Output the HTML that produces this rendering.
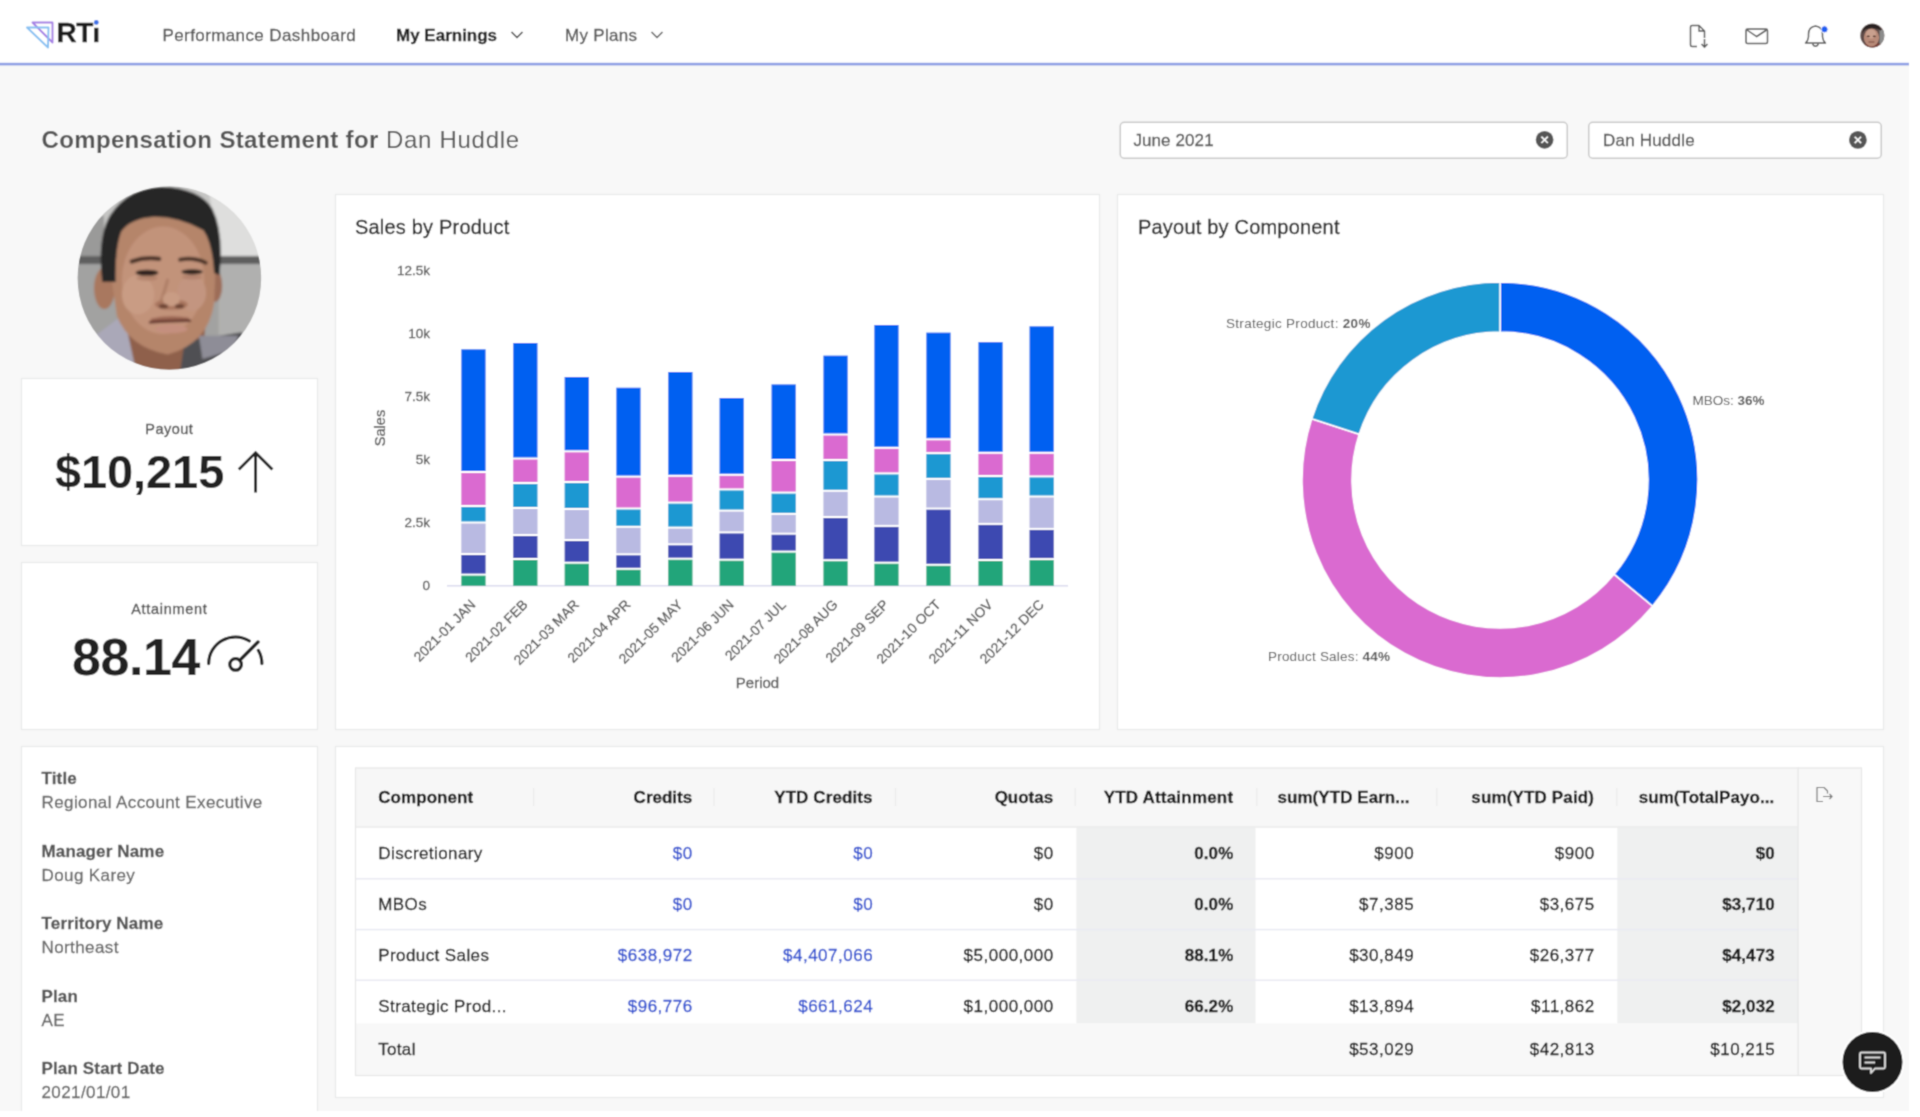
<!DOCTYPE html>
<html><head><meta charset="utf-8">
<style>
*{margin:0;padding:0;box-sizing:border-box}
html,body{width:1920px;height:1117px;overflow:hidden;background:#fff}
svg{position:absolute;left:0;top:0;display:block;will-change:transform}
text{font-family:"Liberation Sans",sans-serif}
</style></head><body>
<svg width="1920" height="1117" viewBox="0 0 1920 1117">
<defs><filter id="soft" x="0" y="0" width="1920" height="1117" filterUnits="userSpaceOnUse"><feConvolveMatrix order="3" kernelMatrix="0.03516 0.11719 0.03516 0.11719 0.39062 0.11719 0.03516 0.11719 0.03516" edgeMode="duplicate" preserveAlpha="false"/></filter></defs>
<g filter="url(#soft)">

<rect x="0" y="0" width="1909" height="1111" fill="#f8f8f8"/>
<rect x="0" y="0" width="1909" height="63" fill="#ffffff"/>
<rect x="0" y="62.8" width="1909" height="2.6" fill="#8c9ee4"/>
<path d="M32.5 22.5 L52.5 22.5 L52.5 42.5 Z" fill="none" stroke="#a47fe4" stroke-width="1.9" stroke-linejoin="round"/>
<path d="M27 27.5 L48.5 27.5 L48 47.5 Z" fill="none" stroke="#86c0f2" stroke-width="1.9" stroke-linejoin="round"/>
<text x="56.5" y="42.2" font-size="28" font-weight="bold" letter-spacing="-0.4" fill="#1c1c1c" stroke="#1c1c1c" stroke-width="0.3">RT</text>
<rect x="94.2" y="27.8" width="4.2" height="14.4" fill="#1c1c1c"/>
<circle cx="96.3" cy="22.4" r="2.4" fill="#3a6fe6"/>
<text x="162.5" y="40.5" font-size="17" letter-spacing="0.4" fill="#555" stroke="#555" stroke-width="0.3">Performance Dashboard</text>
<text x="396" y="40.5" font-size="17" font-weight="bold" fill="#1e1e1e" stroke="#1e1e1e" stroke-width="0.3">My Earnings</text>
<path d="M511.5 32 L517 37.5 L522.5 32" fill="none" stroke="#333" stroke-width="1.5"/>
<text x="565" y="40.5" font-size="17" letter-spacing="0.3" fill="#555" stroke="#555" stroke-width="0.3">My Plans</text>
<path d="M651.5 32 L657 37.5 L662.5 32" fill="none" stroke="#555" stroke-width="1.5"/>
<path d="M1697 46.5 L1692 46.5 Q1690.5 46.5 1690.5 45 L1690.5 27 Q1690.5 25.5 1692 25.5 L1699 25.5 L1704.5 31 L1704.5 38" fill="none" stroke="#555" stroke-width="1.5" stroke-linejoin="round"/>
<path d="M1699 25.5 L1699 31 L1704.5 31" fill="none" stroke="#555" stroke-width="1.3"/>
<path d="M1704.5 39 L1704.5 47 M1701.5 44 L1704.5 47.2 L1707.5 44" fill="none" stroke="#555" stroke-width="1.5"/>
<rect x="1746" y="29" width="21.5" height="14.5" rx="1.5" fill="none" stroke="#555" stroke-width="1.5"/>
<path d="M1747 30 L1756.7 36.5 L1766.5 30" fill="none" stroke="#555" stroke-width="1.5"/>
<path d="M1805.5 43 Q1808 41 1808.5 37 L1808.5 34 Q1808.5 27 1815.5 26 Q1822.5 27 1822.5 34 L1822.5 37 Q1823 41 1825.5 43 Z" fill="none" stroke="#555" stroke-width="1.5" stroke-linejoin="round"/>
<path d="M1812.5 44 Q1815.5 48.5 1818.5 44" fill="none" stroke="#555" stroke-width="1.5"/>
<circle cx="1824.5" cy="29.3" r="3.6" fill="#1f5ef2" stroke="#fff" stroke-width="1"/>
<defs><clipPath id="sav"><circle cx="1872.3" cy="35.5" r="12"/></clipPath><clipPath id="bav"><circle cx="169.4" cy="278" r="91.8"/></clipPath></defs>
<g clip-path="url(#sav)"><rect x="1860" y="23" width="25" height="25" fill="#5e4c48"/><rect x="1879.5" y="30" width="6" height="18" fill="#8c8c8c"/><path d="M1862 48 L1864 44 Q1872 42 1881 44 L1884 48 Z" fill="#7a4038"/><ellipse cx="1871.5" cy="37.5" rx="7.6" ry="9" fill="#b88a78"/><ellipse cx="1871" cy="34" rx="5" ry="4.5" fill="#c9a08e"/><ellipse cx="1868.3" cy="36.3" rx="1.6" ry="0.9" fill="#5a3a30"/><ellipse cx="1874.3" cy="36.3" rx="1.6" ry="0.9" fill="#5a3a30"/><path d="M1868.5 42 L1874.5 42" stroke="#7a4a3e" stroke-width="1"/><path d="M1862.5 33 Q1863 24 1872 24 Q1880 24 1881 31 L1879 29.5 Q1872 26.5 1865 29.5 Z" fill="#2a2220"/></g>
<text x="41.5" y="148.2" font-size="24" fill="#555" letter-spacing="0.35"><tspan font-weight="bold">Compensation Statement for</tspan><tspan letter-spacing="0.7"> Dan Huddle</tspan></text>
<rect x="1120.25" y="122.25" width="447" height="36" fill="#ffffff" stroke="#c9c9c9" stroke-width="1.5" rx="4"/>
<text x="1133.4" y="145.8" font-size="17" letter-spacing="0.1" fill="#555" stroke="#555" stroke-width="0.3">June 2021</text>
<circle cx="1544.6" cy="139.8" r="8.9" fill="#555"/><path d="M1541.4 136.6 L1547.8 143 M1547.8 136.6 L1541.4 143" stroke="#fff" stroke-width="1.6"/>
<rect x="1588.75" y="122.25" width="292.5" height="36" fill="#ffffff" stroke="#c9c9c9" stroke-width="1.5" rx="4"/>
<text x="1603" y="145.8" font-size="17" letter-spacing="0.2" fill="#555" stroke="#555" stroke-width="0.3">Dan Huddle</text>
<circle cx="1857.9" cy="139.9" r="8.9" fill="#555"/><path d="M1854.7 136.7 L1861.1 143.1 M1861.1 136.7 L1854.7 143.1" stroke="#fff" stroke-width="1.6"/>
<defs><filter id="blr" x="-5%" y="-5%" width="110%" height="110%"><feGaussianBlur stdDeviation="7"/></filter></defs>
<g clip-path="url(#bav)">
<g transform="translate(70,180) scale(0.17905)" filter="url(#blr)">
<rect x="-50" y="-50" width="1217" height="1217" fill="#a3a3a2"/>
<rect x="-50" y="-50" width="1217" height="480" fill="#c4c4c3"/>
<path d="M760 -50 L1167 -50 L1167 420 L830 430 Z" fill="#dededd"/>
<path d="M0 200 L190 200 L190 440 L0 440 Z" fill="#9a9a99"/>
<rect x="-50" y="425" width="1217" height="45" fill="#5f5f5e"/>
<rect x="-50" y="470" width="1217" height="700" fill="#a2a2a1"/>
<rect x="830" y="470" width="300" height="420" fill="#b0b0af"/>
<path d="M290 780 L760 780 L720 1167 L330 1167 Z" fill="#8f604c"/>
<path d="M100 900 L300 750 L390 1167 L40 1167 Z" fill="#aaa8b8"/>
<path d="M640 900 L960 850 L1060 1167 L600 1167 Z" fill="#505053"/>
<path d="M720 870 L940 870 L910 950 L740 1000 Z" fill="#8e8d97"/>
<ellipse cx="192" cy="605" rx="58" ry="115" fill="#a9785f"/>
<ellipse cx="812" cy="590" rx="38" ry="90" fill="#9d6d58"/>
<path d="M215 430 Q215 200 510 190 Q815 200 815 430 L805 690 Q770 915 545 975 Q330 935 262 760 Z" fill="#b5856b"/>
<ellipse cx="520" cy="560" rx="230" ry="300" fill="#c2937a"/>
<ellipse cx="380" cy="640" rx="90" ry="110" fill="#c99c84"/>
<ellipse cx="680" cy="630" rx="80" ry="100" fill="#c39580"/>
<path d="M180 570 Q150 320 225 195 Q330 40 515 38 Q720 45 795 160 Q860 290 835 530 L805 520 Q795 350 745 280 Q610 205 470 205 Q335 215 285 290 Q250 390 255 570 Z" fill="#262525"/>
<path d="M345 455 Q420 428 498 440" fill="none" stroke="#4a3328" stroke-width="24" stroke-linecap="round"/>
<path d="M615 445 Q690 430 758 462" fill="none" stroke="#4a3328" stroke-width="22" stroke-linecap="round"/>
<ellipse cx="430" cy="518" rx="64" ry="17" fill="#2e221d"/>
<ellipse cx="682" cy="513" rx="60" ry="15" fill="#2e221d"/>
<ellipse cx="430" cy="548" rx="60" ry="14" fill="#a87862" opacity="0.6"/>
<ellipse cx="682" cy="543" rx="56" ry="13" fill="#a87862" opacity="0.6"/>
<path d="M545 560 Q525 630 510 675" fill="none" stroke="#a7775f" stroke-width="18" stroke-linecap="round" opacity="0.7"/>
<ellipse cx="566" cy="695" rx="92" ry="30" fill="#a9765f"/>
<ellipse cx="566" cy="665" rx="48" ry="40" fill="#c99c84"/>
<ellipse cx="522" cy="705" rx="26" ry="13" fill="#6e4536"/>
<ellipse cx="612" cy="705" rx="26" ry="13" fill="#6e4536"/>
<path d="M450 775 Q560 750 665 770 L660 790 Q560 785 455 795 Z" fill="#9a6552"/>
<path d="M447 795 Q560 785 670 786" fill="none" stroke="#5e3329" stroke-width="14" stroke-linecap="round"/>
<ellipse cx="566" cy="832" rx="90" ry="24" fill="#c48f7e"/>
</g></g>
<rect x="21.5" y="378.5" width="296" height="167" fill="#ffffff" stroke="#e9eaea" stroke-width="1.2"/>
<rect x="21.5" y="562.5" width="296" height="167" fill="#ffffff" stroke="#e9eaea" stroke-width="1.2"/>
<rect x="21.5" y="746.5" width="296" height="404" fill="#ffffff" stroke="#e9eaea" stroke-width="1.2"/>
<rect x="335.5" y="194.5" width="764" height="535" fill="#ffffff" stroke="#e9eaea" stroke-width="1.2"/>
<rect x="1117.5" y="194.5" width="766" height="535" fill="#ffffff" stroke="#e9eaea" stroke-width="1.2"/>
<rect x="335.5" y="746.5" width="1548" height="351" fill="#ffffff" stroke="#e9eaea" stroke-width="1.2"/>
<text x="169.3" y="434.4" font-size="14.5" letter-spacing="0.5" text-anchor="middle" fill="#555" stroke="#555" stroke-width="0.35">Payout</text>
<text x="55" y="488.3" font-size="47" font-weight="bold" letter-spacing="-0.1" fill="#222">$10,215</text>
<path d="M255.6 453.5 L255.6 492.6 M238.8 469.5 L255.6 452.7 L272.4 469.5" fill="none" stroke="#222" stroke-width="2.9" stroke-linejoin="miter"/>
<text x="169.3" y="614.4" font-size="14.5" letter-spacing="0.7" text-anchor="middle" fill="#555" stroke="#555" stroke-width="0.35">Attainment</text>
<text x="72" y="675" font-size="52" font-weight="bold" letter-spacing="-0.4" fill="#222">88.14</text>
<path d="M208.7 663.6 A26.6 26.6 0 0 1 249.4 641.0 M258.3 650.3 A26.6 26.6 0 0 1 261.9 663.6" fill="none" stroke="#222" stroke-width="3.1" stroke-linecap="round"/>
<circle cx="235.6" cy="664.4" r="5.8" fill="none" stroke="#222" stroke-width="3.2"/>
<path d="M239.8 660.2 L258 642" fill="none" stroke="#222" stroke-width="3.4" stroke-linecap="round"/>
<text x="41.5" y="784.1" font-size="17" font-weight="bold" letter-spacing="0.15" fill="#555" stroke="#555" stroke-width="0.3">Title</text>
<text x="41.5" y="808.4" font-size="17" letter-spacing="0.4" fill="#666" stroke="#666" stroke-width="0.3">Regional Account Executive</text>
<text x="41.5" y="857.0" font-size="17" font-weight="bold" letter-spacing="0.15" fill="#555" stroke="#555" stroke-width="0.3">Manager Name</text>
<text x="41.5" y="881.3" font-size="17" letter-spacing="0.4" fill="#666" stroke="#666" stroke-width="0.3">Doug Karey</text>
<text x="41.5" y="929.1" font-size="17" font-weight="bold" letter-spacing="0.15" fill="#555" stroke="#555" stroke-width="0.3">Territory Name</text>
<text x="41.5" y="953.4" font-size="17" letter-spacing="0.4" fill="#666" stroke="#666" stroke-width="0.3">Northeast</text>
<text x="41.5" y="1001.5" font-size="17" font-weight="bold" letter-spacing="0.15" fill="#555" stroke="#555" stroke-width="0.3">Plan</text>
<text x="41.5" y="1025.8" font-size="17" letter-spacing="0.4" fill="#666" stroke="#666" stroke-width="0.3">AE</text>
<text x="41.5" y="1073.9" font-size="17" font-weight="bold" letter-spacing="0.15" fill="#555" stroke="#555" stroke-width="0.3">Plan Start Date</text>
<text x="41.5" y="1098.2" font-size="17" letter-spacing="0.4" fill="#666" stroke="#666" stroke-width="0.3">2021/01/01</text>
<text x="355" y="234" font-size="20" letter-spacing="0.2" fill="#262626" stroke="#262626" stroke-width="0.3">Sales by Product</text>
<text x="430" y="589.8" font-size="13.5" text-anchor="end" fill="#585858" stroke="#585858" stroke-width="0.3">0</text>
<text x="430" y="526.9" font-size="13.5" text-anchor="end" fill="#585858" stroke="#585858" stroke-width="0.3">2.5k</text>
<text x="430" y="464.0" font-size="13.5" text-anchor="end" fill="#585858" stroke="#585858" stroke-width="0.3">5k</text>
<text x="430" y="401.1" font-size="13.5" text-anchor="end" fill="#585858" stroke="#585858" stroke-width="0.3">7.5k</text>
<text x="430" y="338.2" font-size="13.5" text-anchor="end" fill="#585858" stroke="#585858" stroke-width="0.3">10k</text>
<text x="430" y="275.3" font-size="13.5" text-anchor="end" fill="#585858" stroke="#585858" stroke-width="0.3">12.5k</text>
<text transform="translate(385,428) rotate(-90)" font-size="14.5" text-anchor="middle" fill="#585858" stroke="#585858" stroke-width="0.3">Sales</text>
<text x="757.5" y="688" font-size="15" text-anchor="middle" fill="#585858" stroke="#585858" stroke-width="0.3">Period</text>
<text transform="translate(476.4,605.5) rotate(-45)" font-size="13.8" text-anchor="end" fill="#585858" stroke="#585858" stroke-width="0.3">2021-01 JAN</text>
<text transform="translate(528.4,605.5) rotate(-45)" font-size="13.8" text-anchor="end" fill="#585858" stroke="#585858" stroke-width="0.3">2021-02 FEB</text>
<text transform="translate(579.8,605.5) rotate(-45)" font-size="13.8" text-anchor="end" fill="#585858" stroke="#585858" stroke-width="0.3">2021-03 MAR</text>
<text transform="translate(631.4,605.5) rotate(-45)" font-size="13.8" text-anchor="end" fill="#585858" stroke="#585858" stroke-width="0.3">2021-04 APR</text>
<text transform="translate(683.4,605.5) rotate(-45)" font-size="13.8" text-anchor="end" fill="#585858" stroke="#585858" stroke-width="0.3">2021-05 MAY</text>
<text transform="translate(734.6,605.5) rotate(-45)" font-size="13.8" text-anchor="end" fill="#585858" stroke="#585858" stroke-width="0.3">2021-06 JUN</text>
<text transform="translate(786.6,605.5) rotate(-45)" font-size="13.8" text-anchor="end" fill="#585858" stroke="#585858" stroke-width="0.3">2021-07 JUL</text>
<text transform="translate(838.5,605.5) rotate(-45)" font-size="13.8" text-anchor="end" fill="#585858" stroke="#585858" stroke-width="0.3">2021-08 AUG</text>
<text transform="translate(889.4,605.5) rotate(-45)" font-size="13.8" text-anchor="end" fill="#585858" stroke="#585858" stroke-width="0.3">2021-09 SEP</text>
<text transform="translate(941.4,605.5) rotate(-45)" font-size="13.8" text-anchor="end" fill="#585858" stroke="#585858" stroke-width="0.3">2021-10 OCT</text>
<text transform="translate(993.5,605.5) rotate(-45)" font-size="13.8" text-anchor="end" fill="#585858" stroke="#585858" stroke-width="0.3">2021-11 NOV</text>
<text transform="translate(1044.7,605.5) rotate(-45)" font-size="13.8" text-anchor="end" fill="#585858" stroke="#585858" stroke-width="0.3">2021-12 DEC</text>
<rect x="447" y="585.0" width="621" height="1.6" fill="#dcdcee"/>
<rect x="461.3" y="349.3" width="24.3" height="121.7" fill="#0561f1"/>
<rect x="461.3" y="473.0" width="24.3" height="32.0" fill="#da6bd0"/>
<rect x="461.3" y="507.0" width="24.3" height="14.5" fill="#1b98d2"/>
<rect x="461.3" y="523.5" width="24.3" height="29.5" fill="#b9bae2"/>
<rect x="461.3" y="555.0" width="24.3" height="18.6" fill="#3d48b1"/>
<rect x="461.3" y="575.6" width="24.3" height="10.2" fill="#21a57a"/>
<rect x="513.2" y="343.0" width="24.3" height="114.5" fill="#0561f1"/>
<rect x="513.2" y="459.5" width="24.3" height="22.5" fill="#da6bd0"/>
<rect x="513.2" y="484.0" width="24.3" height="23.0" fill="#1b98d2"/>
<rect x="513.2" y="509.0" width="24.3" height="25.0" fill="#b9bae2"/>
<rect x="513.2" y="536.0" width="24.3" height="22.0" fill="#3d48b1"/>
<rect x="513.2" y="560.0" width="24.3" height="25.8" fill="#21a57a"/>
<rect x="564.6" y="377.0" width="24.3" height="73.3" fill="#0561f1"/>
<rect x="564.6" y="452.3" width="24.3" height="28.7" fill="#da6bd0"/>
<rect x="564.6" y="483.0" width="24.3" height="25.0" fill="#1b98d2"/>
<rect x="564.6" y="510.0" width="24.3" height="29.0" fill="#b9bae2"/>
<rect x="564.6" y="541.0" width="24.3" height="20.7" fill="#3d48b1"/>
<rect x="564.6" y="563.7" width="24.3" height="22.1" fill="#21a57a"/>
<rect x="616.3" y="387.7" width="24.3" height="87.9" fill="#0561f1"/>
<rect x="616.3" y="477.6" width="24.3" height="29.9" fill="#da6bd0"/>
<rect x="616.3" y="509.5" width="24.3" height="16.3" fill="#1b98d2"/>
<rect x="616.3" y="527.8" width="24.3" height="25.5" fill="#b9bae2"/>
<rect x="616.3" y="555.3" width="24.3" height="12.5" fill="#3d48b1"/>
<rect x="616.3" y="569.8" width="24.3" height="16.0" fill="#21a57a"/>
<rect x="668.2" y="372.0" width="24.3" height="102.8" fill="#0561f1"/>
<rect x="668.2" y="476.8" width="24.3" height="24.8" fill="#da6bd0"/>
<rect x="668.2" y="503.6" width="24.3" height="23.0" fill="#1b98d2"/>
<rect x="668.2" y="528.6" width="24.3" height="14.7" fill="#b9bae2"/>
<rect x="668.2" y="545.3" width="24.3" height="12.4" fill="#3d48b1"/>
<rect x="668.2" y="559.7" width="24.3" height="26.1" fill="#21a57a"/>
<rect x="719.5" y="398.0" width="24.3" height="75.8" fill="#0561f1"/>
<rect x="719.5" y="475.8" width="24.3" height="12.6" fill="#da6bd0"/>
<rect x="719.5" y="490.4" width="24.3" height="19.2" fill="#1b98d2"/>
<rect x="719.5" y="511.6" width="24.3" height="19.8" fill="#b9bae2"/>
<rect x="719.5" y="533.4" width="24.3" height="25.3" fill="#3d48b1"/>
<rect x="719.5" y="560.7" width="24.3" height="25.1" fill="#21a57a"/>
<rect x="771.5" y="384.4" width="24.3" height="74.6" fill="#0561f1"/>
<rect x="771.5" y="461.0" width="24.3" height="30.6" fill="#da6bd0"/>
<rect x="771.5" y="493.6" width="24.3" height="19.3" fill="#1b98d2"/>
<rect x="771.5" y="514.9" width="24.3" height="17.8" fill="#b9bae2"/>
<rect x="771.5" y="534.7" width="24.3" height="15.9" fill="#3d48b1"/>
<rect x="771.5" y="552.6" width="24.3" height="33.2" fill="#21a57a"/>
<rect x="823.4" y="355.6" width="24.3" height="77.9" fill="#0561f1"/>
<rect x="823.4" y="435.5" width="24.3" height="23.5" fill="#da6bd0"/>
<rect x="823.4" y="461.0" width="24.3" height="28.8" fill="#1b98d2"/>
<rect x="823.4" y="491.8" width="24.3" height="24.2" fill="#b9bae2"/>
<rect x="823.4" y="518.0" width="24.3" height="41.2" fill="#3d48b1"/>
<rect x="823.4" y="561.2" width="24.3" height="24.6" fill="#21a57a"/>
<rect x="874.3" y="325.0" width="24.3" height="121.8" fill="#0561f1"/>
<rect x="874.3" y="448.8" width="24.3" height="23.6" fill="#da6bd0"/>
<rect x="874.3" y="474.4" width="24.3" height="21.1" fill="#1b98d2"/>
<rect x="874.3" y="497.5" width="24.3" height="27.4" fill="#b9bae2"/>
<rect x="874.3" y="526.9" width="24.3" height="34.8" fill="#3d48b1"/>
<rect x="874.3" y="563.7" width="24.3" height="22.1" fill="#21a57a"/>
<rect x="926.3" y="332.6" width="24.3" height="105.7" fill="#0561f1"/>
<rect x="926.3" y="440.3" width="24.3" height="11.8" fill="#da6bd0"/>
<rect x="926.3" y="454.1" width="24.3" height="23.8" fill="#1b98d2"/>
<rect x="926.3" y="479.9" width="24.3" height="27.7" fill="#b9bae2"/>
<rect x="926.3" y="509.6" width="24.3" height="54.2" fill="#3d48b1"/>
<rect x="926.3" y="565.8" width="24.3" height="20.0" fill="#21a57a"/>
<rect x="978.4" y="342.1" width="24.3" height="109.7" fill="#0561f1"/>
<rect x="978.4" y="453.8" width="24.3" height="21.2" fill="#da6bd0"/>
<rect x="978.4" y="477.0" width="24.3" height="21.2" fill="#1b98d2"/>
<rect x="978.4" y="500.2" width="24.3" height="22.7" fill="#b9bae2"/>
<rect x="978.4" y="524.9" width="24.3" height="34.1" fill="#3d48b1"/>
<rect x="978.4" y="561.0" width="24.3" height="24.8" fill="#21a57a"/>
<rect x="1029.5" y="326.3" width="24.3" height="125.5" fill="#0561f1"/>
<rect x="1029.5" y="453.8" width="24.3" height="21.6" fill="#da6bd0"/>
<rect x="1029.5" y="477.4" width="24.3" height="18.1" fill="#1b98d2"/>
<rect x="1029.5" y="497.5" width="24.3" height="30.4" fill="#b9bae2"/>
<rect x="1029.5" y="529.9" width="24.3" height="28.2" fill="#3d48b1"/>
<rect x="1029.5" y="560.1" width="24.3" height="25.7" fill="#21a57a"/>
<text x="1138" y="234" font-size="20" letter-spacing="0.2" fill="#262626" stroke="#262626" stroke-width="0.3">Payout by Component</text>
<path d="M1500.00 282.00 A198.0 198.0 0 0 1 1652.56 606.21 L1614.04 574.34 A148.0 148.0 0 0 0 1500.00 332.00 Z" fill="#0561f1" stroke="#fff" stroke-width="1.5" stroke-linejoin="bevel"/>
<path d="M1652.56 606.21 A198.0 198.0 0 0 1 1311.69 418.81 L1359.24 434.27 A148.0 148.0 0 0 0 1614.04 574.34 Z" fill="#da6bd0" stroke="#fff" stroke-width="1.5" stroke-linejoin="bevel"/>
<path d="M1311.69 418.81 A198.0 198.0 0 0 1 1500.00 282.00 L1500.00 332.00 A148.0 148.0 0 0 0 1359.24 434.27 Z" fill="#1b98d2" stroke="#fff" stroke-width="1.5" stroke-linejoin="bevel"/>
<text x="1226" y="328" font-size="13.5" letter-spacing="0.3" fill="#555">Strategic Product: <tspan font-weight="bold">20%</tspan></text>
<text x="1692.5" y="405" font-size="13.5" fill="#555">MBOs: <tspan font-weight="bold">36%</tspan></text>
<text x="1268" y="660.5" font-size="13.5" letter-spacing="0.2" fill="#555">Product Sales: <tspan font-weight="bold">44%</tspan></text>
<rect x="355" y="767.5" width="1507" height="308.5" fill="#ffffff"/>
<rect x="355" y="767.5" width="1443" height="59.5" fill="#f7f7f7"/>
<rect x="1798" y="767.5" width="64" height="308.5" fill="#f8f8f8"/>
<rect x="1076.4" y="827" width="179.0999999999999" height="196.5" fill="#eff0f0"/>
<rect x="1617.3" y="827" width="180.70000000000005" height="196.5" fill="#eff0f0"/>
<rect x="355" y="1023.5" width="1443" height="52.5" fill="#f8f8f8"/>
<rect x="355" y="878.05" width="1443" height="1.5" fill="#e9eaf3"/>
<rect x="355" y="928.85" width="1443" height="1.5" fill="#e9eaf3"/>
<rect x="355" y="979.45" width="1443" height="1.5" fill="#e9eaf3"/>
<rect x="355" y="826.25" width="1443" height="1.5" fill="#ececec"/>
<rect x="355.5" y="768.0" width="1506" height="307.5" fill="none" stroke="#e6e6e6" stroke-width="1.2"/>
<rect x="1797.5" y="767.5" width="1.2" height="308.5" fill="#e6e6e6"/>
<rect x="533.0" y="788" width="1.2" height="18" fill="#ebebeb"/>
<rect x="713.4" y="788" width="1.2" height="18" fill="#ebebeb"/>
<rect x="894.9" y="788" width="1.2" height="18" fill="#ebebeb"/>
<rect x="1074.7" y="788" width="1.2" height="18" fill="#ebebeb"/>
<rect x="1256.1000000000001" y="788" width="1.2" height="18" fill="#ebebeb"/>
<rect x="1436.1000000000001" y="788" width="1.2" height="18" fill="#ebebeb"/>
<rect x="1616.1000000000001" y="788" width="1.2" height="18" fill="#ebebeb"/>
<text x="378.3" y="802.7" font-size="17" font-weight="bold" letter-spacing="0.05" fill="#151515" stroke="#151515" stroke-width="0.3">Component</text>
<text x="692.2" y="802.7" font-size="17" font-weight="bold" text-anchor="end" fill="#151515" stroke="#151515" stroke-width="0.3">Credits</text>
<text x="872.6" y="802.7" font-size="17" font-weight="bold" letter-spacing="0.1" text-anchor="end" fill="#151515" stroke="#151515" stroke-width="0.3">YTD Credits</text>
<text x="1053.2" y="802.7" font-size="17" font-weight="bold" text-anchor="end" fill="#151515" stroke="#151515" stroke-width="0.3">Quotas</text>
<text x="1233.3" y="802.7" font-size="17" font-weight="bold" letter-spacing="0.2" text-anchor="end" fill="#151515" stroke="#151515" stroke-width="0.3">YTD Attainment</text>
<text x="1277.5" y="802.7" font-size="17" font-weight="bold" letter-spacing="0.05" fill="#151515" stroke="#151515" stroke-width="0.3">sum(YTD Earn...</text>
<text x="1594.2" y="802.7" font-size="17" font-weight="bold" letter-spacing="0.15" text-anchor="end" fill="#151515" stroke="#151515" stroke-width="0.3">sum(YTD Paid)</text>
<text x="1638.7" y="802.7" font-size="17" font-weight="bold" letter-spacing="0.05" fill="#151515" stroke="#151515" stroke-width="0.3">sum(TotalPayo...</text>
<path d="M1823 801.5 L1817 801.5 L1817 787.5 L1824 787.5 L1827.5 791 L1827.5 793.5" fill="none" stroke="#777" stroke-width="1.2" stroke-linejoin="round"/>
<path d="M1823 796.5 L1832 796.5 M1829.5 794 L1832 796.5 L1829.5 799" fill="none" stroke="#777" stroke-width="1.2"/>
<text x="378.3" y="859.1" font-size="17" letter-spacing="0.4" fill="#1a1a1a" stroke="#1a1a1a" stroke-width="0.3">Discretionary</text>
<text x="692.7" y="859.1" font-size="17" letter-spacing="0.5" text-anchor="end" fill="#2f50d0" stroke="#2f50d0" stroke-width="0.3">$0</text>
<text x="873.1" y="859.1" font-size="17" letter-spacing="0.5" text-anchor="end" fill="#2f50d0" stroke="#2f50d0" stroke-width="0.3">$0</text>
<text x="1053.7" y="859.1" font-size="17" letter-spacing="0.5" text-anchor="end" fill="#141414" stroke="#141414" stroke-width="0.3">$0</text>
<text x="1233.3999999999999" y="859.1" font-size="17" font-weight="bold" letter-spacing="0.1" text-anchor="end" fill="#141414" stroke="#141414" stroke-width="0.3">0.0%</text>
<text x="1414.1" y="859.1" font-size="17" letter-spacing="0.5" text-anchor="end" fill="#141414" stroke="#141414" stroke-width="0.3">$900</text>
<text x="1594.7" y="859.1" font-size="17" letter-spacing="0.5" text-anchor="end" fill="#141414" stroke="#141414" stroke-width="0.3">$900</text>
<text x="1774.8" y="859.1" font-size="17" font-weight="bold" letter-spacing="0.1" text-anchor="end" fill="#141414" stroke="#141414" stroke-width="0.3">$0</text>
<text x="378.3" y="910.0" font-size="17" letter-spacing="0.4" fill="#1a1a1a" stroke="#1a1a1a" stroke-width="0.3">MBOs</text>
<text x="692.7" y="910.0" font-size="17" letter-spacing="0.5" text-anchor="end" fill="#2f50d0" stroke="#2f50d0" stroke-width="0.3">$0</text>
<text x="873.1" y="910.0" font-size="17" letter-spacing="0.5" text-anchor="end" fill="#2f50d0" stroke="#2f50d0" stroke-width="0.3">$0</text>
<text x="1053.7" y="910.0" font-size="17" letter-spacing="0.5" text-anchor="end" fill="#141414" stroke="#141414" stroke-width="0.3">$0</text>
<text x="1233.3999999999999" y="910.0" font-size="17" font-weight="bold" letter-spacing="0.1" text-anchor="end" fill="#141414" stroke="#141414" stroke-width="0.3">0.0%</text>
<text x="1414.1" y="910.0" font-size="17" letter-spacing="0.5" text-anchor="end" fill="#141414" stroke="#141414" stroke-width="0.3">$7,385</text>
<text x="1594.7" y="910.0" font-size="17" letter-spacing="0.5" text-anchor="end" fill="#141414" stroke="#141414" stroke-width="0.3">$3,675</text>
<text x="1774.8" y="910.0" font-size="17" font-weight="bold" letter-spacing="0.1" text-anchor="end" fill="#141414" stroke="#141414" stroke-width="0.3">$3,710</text>
<text x="378.3" y="960.9" font-size="17" letter-spacing="0.4" fill="#1a1a1a" stroke="#1a1a1a" stroke-width="0.3">Product Sales</text>
<text x="692.7" y="960.9" font-size="17" letter-spacing="0.5" text-anchor="end" fill="#2f50d0" stroke="#2f50d0" stroke-width="0.3">$638,972</text>
<text x="873.1" y="960.9" font-size="17" letter-spacing="0.5" text-anchor="end" fill="#2f50d0" stroke="#2f50d0" stroke-width="0.3">$4,407,066</text>
<text x="1053.7" y="960.9" font-size="17" letter-spacing="0.5" text-anchor="end" fill="#141414" stroke="#141414" stroke-width="0.3">$5,000,000</text>
<text x="1233.3999999999999" y="960.9" font-size="17" font-weight="bold" letter-spacing="0.1" text-anchor="end" fill="#141414" stroke="#141414" stroke-width="0.3">88.1%</text>
<text x="1414.1" y="960.9" font-size="17" letter-spacing="0.5" text-anchor="end" fill="#141414" stroke="#141414" stroke-width="0.3">$30,849</text>
<text x="1594.7" y="960.9" font-size="17" letter-spacing="0.5" text-anchor="end" fill="#141414" stroke="#141414" stroke-width="0.3">$26,377</text>
<text x="1774.8" y="960.9" font-size="17" font-weight="bold" letter-spacing="0.1" text-anchor="end" fill="#141414" stroke="#141414" stroke-width="0.3">$4,473</text>
<text x="378.3" y="1011.6" font-size="17" letter-spacing="0.4" fill="#1a1a1a" stroke="#1a1a1a" stroke-width="0.3">Strategic Prod...</text>
<text x="692.7" y="1011.6" font-size="17" letter-spacing="0.5" text-anchor="end" fill="#2f50d0" stroke="#2f50d0" stroke-width="0.3">$96,776</text>
<text x="873.1" y="1011.6" font-size="17" letter-spacing="0.5" text-anchor="end" fill="#2f50d0" stroke="#2f50d0" stroke-width="0.3">$661,624</text>
<text x="1053.7" y="1011.6" font-size="17" letter-spacing="0.5" text-anchor="end" fill="#141414" stroke="#141414" stroke-width="0.3">$1,000,000</text>
<text x="1233.3999999999999" y="1011.6" font-size="17" font-weight="bold" letter-spacing="0.1" text-anchor="end" fill="#141414" stroke="#141414" stroke-width="0.3">66.2%</text>
<text x="1414.1" y="1011.6" font-size="17" letter-spacing="0.5" text-anchor="end" fill="#141414" stroke="#141414" stroke-width="0.3">$13,894</text>
<text x="1594.7" y="1011.6" font-size="17" letter-spacing="0.5" text-anchor="end" fill="#141414" stroke="#141414" stroke-width="0.3">$11,862</text>
<text x="1774.8" y="1011.6" font-size="17" font-weight="bold" letter-spacing="0.1" text-anchor="end" fill="#141414" stroke="#141414" stroke-width="0.3">$2,032</text>
<text x="378.3" y="1054.9" font-size="17" letter-spacing="0.3" fill="#1a1a1a" stroke="#1a1a1a" stroke-width="0.3">Total</text>
<text x="1414.1" y="1054.9" font-size="17" letter-spacing="0.5" text-anchor="end" fill="#141414" stroke="#141414" stroke-width="0.3">$53,029</text>
<text x="1594.7" y="1054.9" font-size="17" letter-spacing="0.5" text-anchor="end" fill="#141414" stroke="#141414" stroke-width="0.3">$42,813</text>
<text x="1775.2" y="1054.9" font-size="17" letter-spacing="0.5" text-anchor="end" fill="#141414" stroke="#141414" stroke-width="0.3">$10,215</text>
<circle cx="1872.5" cy="1062" r="32" fill="#ffffff"/>
<circle cx="1872.5" cy="1062" r="30" fill="#1f1f1f"/>
<path d="M1861.5 1052.5 L1883.5 1052.5 Q1885 1052.5 1885 1054 L1885 1067 Q1885 1068.5 1883.5 1068.5 L1875 1068.5 L1871 1073 L1871 1068.5 L1861.5 1068.5 Q1860 1068.5 1860 1067 L1860 1054 Q1860 1052.5 1861.5 1052.5 Z" fill="none" stroke="#ddd" stroke-width="1.8" stroke-linejoin="round"/>
<path d="M1864.5 1057.5 L1880.5 1057.5 M1864.5 1062.5 L1875 1062.5" stroke="#ddd" stroke-width="1.8"/>
<rect x="1909" y="0" width="11" height="1117" fill="#ffffff"/>
<rect x="0" y="1111" width="1920" height="6" fill="#ffffff"/>
</g></svg>
</body></html>
